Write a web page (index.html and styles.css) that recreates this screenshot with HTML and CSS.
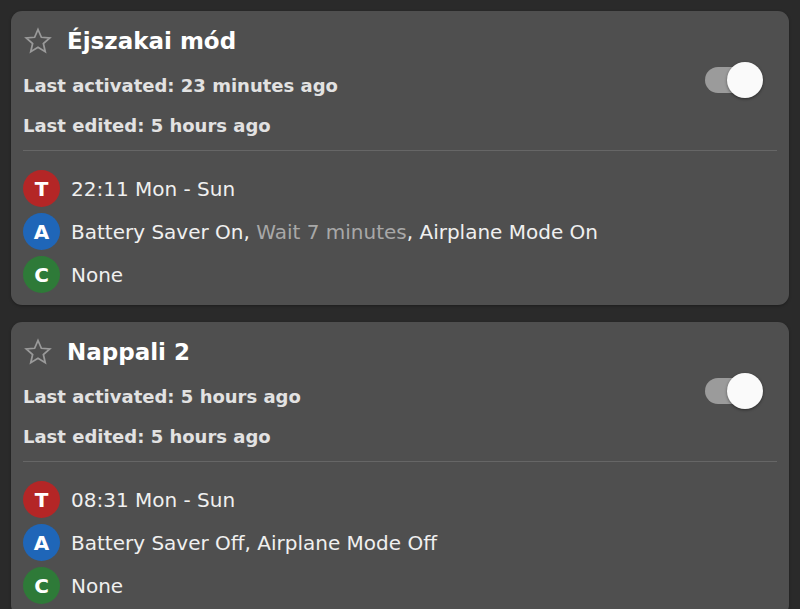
FILE: index.html
```html
<!DOCTYPE html>
<html lang="en">
<head>
    <meta charset="UTF-8">
    <title>Profiles</title>
    <link rel="stylesheet" href="styles.css">
</head>
<body>
    <div class="list">
        <div class="card">
            <div class="head">
                <div class="info">
                    <div class="title">
                        <svg class="star" viewBox="0 0 24 24"><path d="M12 2.8l2.7 6.2 6.7.6-5.1 4.4 1.5 6.6L12 17.1l-5.8 3.5 1.5-6.6-5.1-4.4 6.7-.6z"/></svg>
                        <span>Éjszakai mód</span>
                    </div>
                    <div class="meta">Last activated: 23 minutes ago</div>
                    <div class="meta">Last edited: 5 hours ago</div>
                </div>
                <div class="toggle"><div class="knob"></div></div>
            </div>
            <div class="rows">
                <div class="row"><span class="badge red">T</span>22:11 Mon - Sun</div>
                <div class="row"><span class="badge blue">A</span>Battery Saver On,&nbsp;<span class="dim">Wait 7 minutes</span>, Airplane Mode On</div>
                <div class="row"><span class="badge green">C</span>None</div>
            </div>
        </div>

        <div class="card">
            <div class="head">
                <div class="info">
                    <div class="title">
                        <svg class="star" viewBox="0 0 24 24"><path d="M12 2.8l2.7 6.2 6.7.6-5.1 4.4 1.5 6.6L12 17.1l-5.8 3.5 1.5-6.6-5.1-4.4 6.7-.6z"/></svg>
                        <span>Nappali 2</span>
                    </div>
                    <div class="meta">Last activated: 5 hours ago</div>
                    <div class="meta">Last edited: 5 hours ago</div>
                </div>
                <div class="toggle"><div class="knob"></div></div>
            </div>
            <div class="rows">
                <div class="row"><span class="badge red">T</span>08:31 Mon - Sun</div>
                <div class="row"><span class="badge blue">A</span>Battery Saver Off, Airplane Mode Off</div>
                <div class="row"><span class="badge green">C</span>None</div>
            </div>
        </div>
    </div>
</body>
</html>
```

FILE: styles.css
```css
* {
    box-sizing: border-box;
    margin: 0;
    padding: 0;
}
body {
    font-family: 'DejaVu Sans', Verdana, sans-serif;
    background-color: #2a2a2a;
    color: #f2f2f2;
    padding: 11px;
    overflow: hidden;
}
.list {
    display: flex;
    flex-direction: column;
    gap: 17px;
}
/* Card */
.card {
    background: #4f4f4f;
    border-radius: 11px;
    padding: 13px 12px 0 12px;
    height: 294px;
    box-shadow: 0 1px 3px rgba(0, 0, 0, 0.3);
}
.head {
    display: flex;
    align-items: flex-start;
    justify-content: space-between;
    padding-bottom: 4px;
    border-bottom: 1px solid #666;
}
.title {
    display: flex;
    align-items: center;
    gap: 14px;
    height: 34px;
    font-size: 23px;
    font-weight: bold;
    color: #fff;
}
.star {
    width: 30px;
    height: 30px;
    fill: none;
    stroke: #9a9a9a;
    stroke-width: 1.4;
    stroke-linejoin: miter;
}
.meta {
    font-size: 18px;
    font-weight: bold;
    color: #e2e2e2;
    line-height: 40px;
}
.meta:nth-child(2) {
    margin-top: 8px;
}
/* Switch */
.toggle {
    position: relative;
    width: 46px;
    height: 26px;
    margin-top: 43px;
    margin-right: 26px;
    border-radius: 13px;
    background: #9b9b9b;
}
.knob {
    position: absolute;
    right: -12px;
    top: -5px;
    width: 36px;
    height: 36px;
    border-radius: 50%;
    background: #fafafa;
    box-shadow: 0 1px 3px rgba(0, 0, 0, 0.45);
}
/* Trigger / action / constraint rows */
.rows {
    padding-top: 16px;
}
.row {
    display: flex;
    align-items: center;
    height: 43px;
    font-size: 20px;
    color: #f0f0f0;
}
.dim {
    color: #a8a8a8;
}
.badge {
    display: inline-flex;
    align-items: center;
    justify-content: center;
    width: 37px;
    height: 37px;
    border-radius: 50%;
    margin-right: 11px;
    font-size: 20px;
    font-weight: bold;
    color: #fff;
}
.red {
    background: #b42626;
}
.blue {
    background: #1f66b8;
}
.green {
    background: #2e7a38;
}
```
